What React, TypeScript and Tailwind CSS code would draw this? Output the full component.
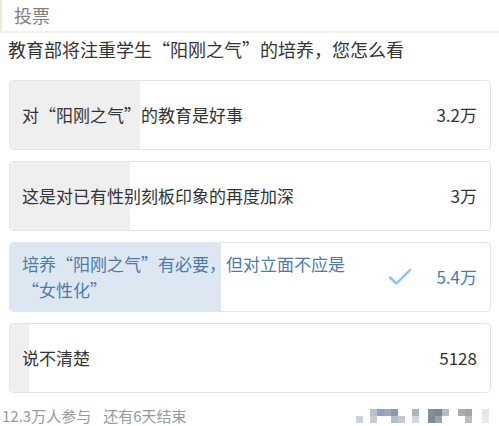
import React from "react";

const font = { fontFamily: '"Noto Sans CJK SC", "Noto Sans", sans-serif' };

type Opt = { text: React.ReactNode; count: string; pct: number; chosen?: boolean };

const options: Opt[] = [
  { text: "对“阳刚之气”的教育是好事", count: "3.2万", pct: 27 },
  { text: "这是对已有性别刻板印象的再度加深", count: "3万", pct: 25 },
  {
    text: (
      <>
        培养“阳刚之气”有必要，但对立面不应是
        <br />
        “女性化”
      </>
    ),
    count: "5.4万",
    pct: 44,
    chosen: true,
  },
  { text: "说不清楚", count: "5128", pct: 4 },
];

const pixels: [number, number, string][] = [
  [0, 7, "#c9d3dc"], [14, 0, "#b5c2d0"], [14, 7, "#c8ccd3"], [21, 0, "#8fa3bb"], [28, 0, "#9aa8c0"], [35, 0, "#8a9bb8"], [35, 7, "#b6bdc9"], [42, 7, "#c5cad0"],
  [56, 0, "#a9b7c6"], [56, 7, "#d3d8de"], [72, 0, "#838e98"], [79, 0, "#7c8790"], [72, 7, "#808a92"], [79, 7, "#9aa3aa"], [86, 0, "#b4bcc2"],
  [102, 0, "#a8aeb4"], [109, 0, "#9ea4aa"], [109, 7, "#b9bec3"], [126, 0, "#e3e6ea"], [126, 7, "#e8eaed"],
];

export default function App() {
  return (
    <div className="w-[499px] h-[426px] bg-white overflow-hidden relative" style={font}>
      <div className="h-[31px] flex items-center pl-[12px] text-[18px] text-[#808080] border-l-[2px] border-[#f3ead2]">
        投票
      </div>
      <div className="h-[2px] bg-[#f2f2f2]" />
      <div className="h-[47px] flex items-start pl-[8px] pt-[3px] text-[18px] text-[#333] leading-[26px]">
        教育部将注重学生“阳刚之气”的培养，您怎么看
      </div>
      <div className="flex flex-col gap-[11px] pl-[9px] pr-[8px]">
        {options.map((o, i) => (
          <div
            key={i}
            className={`relative h-[70px] rounded-[4px] border overflow-hidden ${o.chosen ? "border-[#dfe7ef]" : "border-[#e4e4e4]"}`}
          >
            <div
              className={`absolute left-0 top-0 bottom-0 ${o.chosen ? "bg-[#dde7f1]" : "bg-[#efefef]"}`}
              style={{ width: `${o.pct}%` }}
            />
            <div className="relative h-full flex items-center pl-[12px] pr-[13px]">
              <div className={`flex-1 text-[17px] leading-[26px] ${o.chosen ? "text-[#4b7bab]" : "text-[#333]"}`}>
                {o.text}
              </div>
              {o.chosen && (
                <svg width="24" height="18" viewBox="0 0 24 18" className="mr-[24px]">
                  <path d="M2 9.5 L8.5 15.5 L22 2" fill="none" stroke="#8dc3e6" strokeWidth="2.4" strokeLinecap="round" strokeLinejoin="round" />
                </svg>
              )}
              <div className={`text-[17px] ${o.chosen ? "text-[#4b7bab]" : "text-[#333]"}`}>{o.count}</div>
            </div>
          </div>
        ))}
      </div>
      <div className="flex items-center justify-between mt-[12px] pl-[2px] pr-[9px]">
        <div className="text-[15px] text-[#999] flex gap-[12px]">
          <span>12.3万人参与</span>
          <span>还有6天结束</span>
        </div>
        <div className="relative w-[134px] h-[14px]">
          {pixels.map(([x, y, c], i) => (
            <div key={i} className="absolute w-[7px] h-[7px]" style={{ left: x, top: y, background: c }} />
          ))}
        </div>
      </div>
    </div>
  );
}
